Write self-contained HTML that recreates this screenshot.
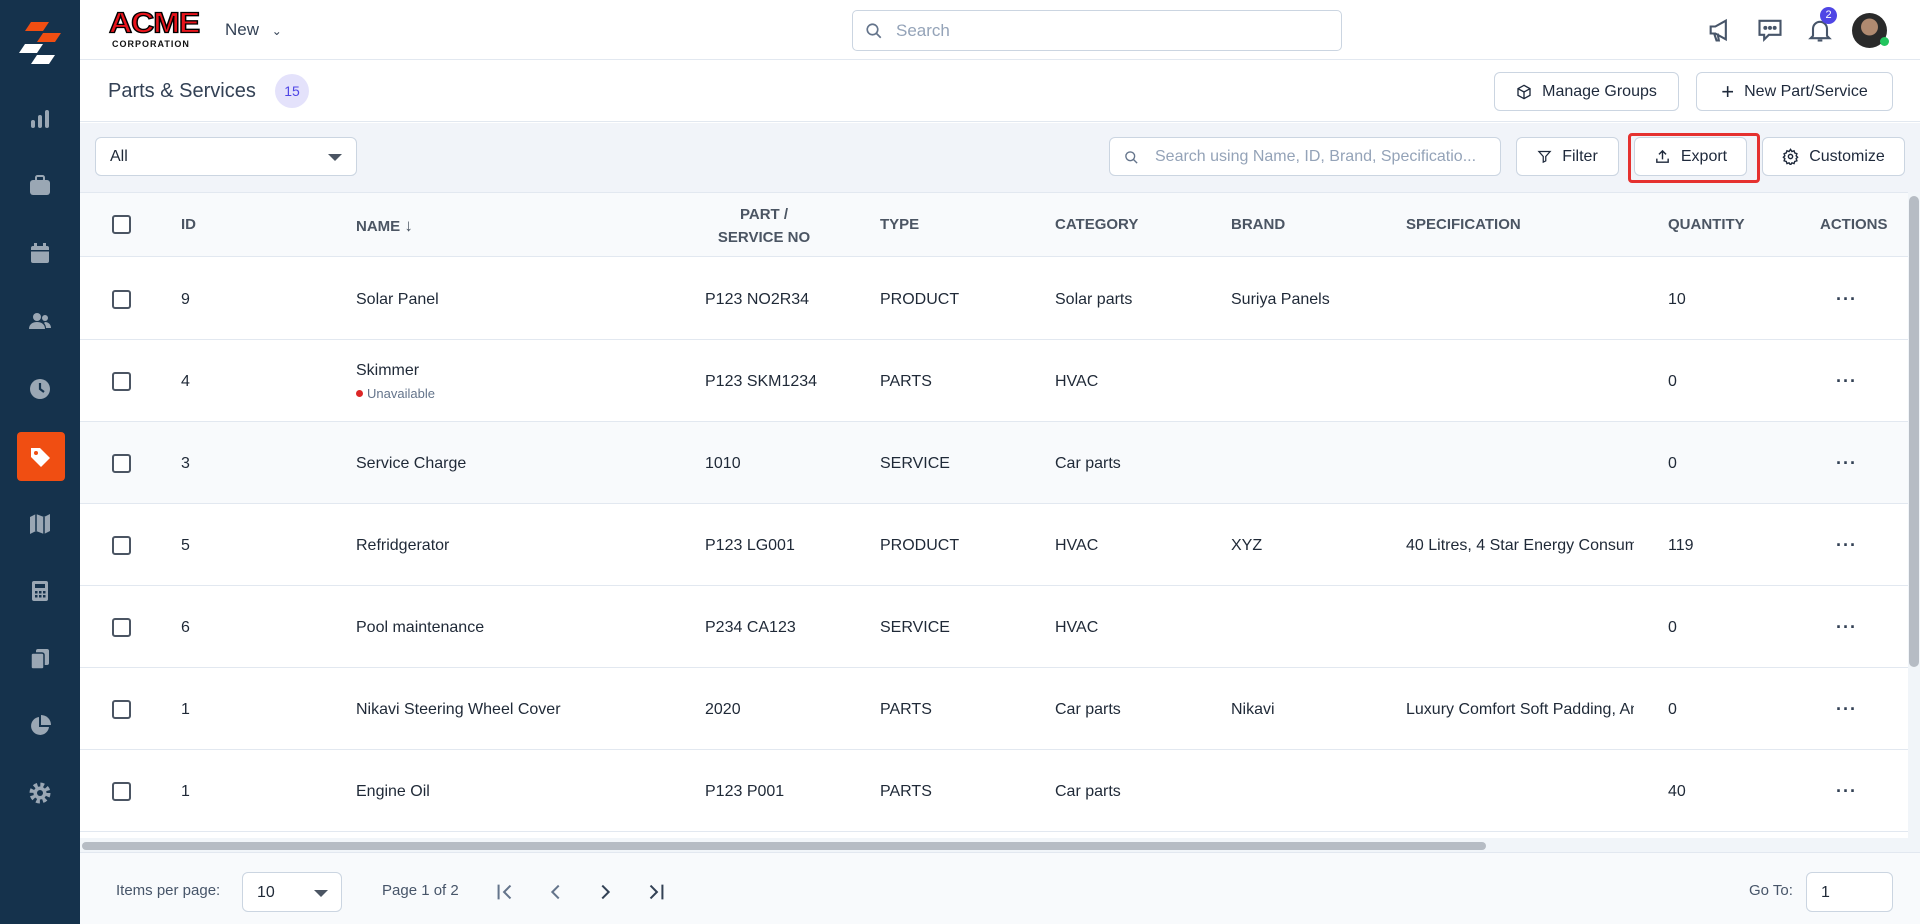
<!DOCTYPE html>
<html><head><meta charset="utf-8"><style>
*{box-sizing:border-box;margin:0;padding:0}
body{width:1920px;height:924px;overflow:hidden;font-family:"Liberation Sans",sans-serif;background:#fff;color:#1f2937;position:relative}
.abs{position:absolute}
.side{left:0;top:0;width:80px;height:924px;background:#15324c}
.sico{position:absolute;left:28px;width:24px;height:24px}
.top{left:80px;top:0;right:0;height:60px;border-bottom:1px solid #e2e8f0;background:#fff}
.btn{position:absolute;border:1px solid #cbd5e1;border-radius:6px;background:#fff;font-size:16px;color:#1e293b;display:flex;align-items:center;justify-content:center;gap:10px}
.hdr{position:absolute;font-size:15px;color:#4b5563;font-weight:bold}
.cell{position:absolute;font-size:16px;color:#1f2937}
.cb{position:absolute;left:112px;width:19px;height:19px;border:2px solid #4b5563;border-radius:3px;background:#fff}
.row{position:absolute;left:80px;width:1828px;height:82px;border-bottom:1px solid #e2e8f0}
.dots{position:absolute;left:1836px;font-size:18px;font-weight:bold;color:#334155;letter-spacing:1px}
</style></head><body>
<div class="abs side">
  <svg class="abs" style="left:17px;top:22px" width="46" height="46" viewBox="0 0 46 46">
    <polygon points="14,0 32,0 26,9 8,9" fill="#f04e12"/>
    <polygon points="26,11 44,11 38,20 20,20" fill="#f04e12"/>
    <polygon points="8,22 26,22 20,31 2,31" fill="#fff"/>
    <polygon points="20,33 38,33 32,42 14,42" fill="#fff"/>
  </svg>
  <svg class="sico" style="top:107px" viewBox="0 0 24 24" fill="#9aa7b4"><rect x="3" y="13" width="4" height="8" rx="2"/><rect x="10" y="8" width="4" height="13" rx="2"/><rect x="17" y="3" width="4" height="18" rx="2"/></svg>
  <svg class="sico" style="top:174px" viewBox="0 0 24 24" fill="#9aa7b4"><rect x="2" y="6" width="20" height="15" rx="3"/><rect x="8" y="2" width="8" height="5" rx="1.5" fill="none" stroke="#9aa7b4" stroke-width="2"/></svg>
  <svg class="sico" style="top:241px" viewBox="0 0 24 24" fill="#9aa7b4"><rect x="3" y="5" width="18" height="17" rx="2"/><rect x="6" y="2" width="3" height="5"/><rect x="15" y="2" width="3" height="5"/><rect x="3" y="9" width="18" height="1.5" fill="#15324c"/></svg>
  <svg class="sico" style="top:309px" viewBox="0 0 24 24" fill="#9aa7b4"><circle cx="9" cy="8" r="4"/><circle cx="17" cy="9" r="3"/><path d="M1 20c0-5 4-7 8-7s8 2 8 7z"/><path d="M17 13c3 0 6 2 6 6h-5c0-2-1-4-2-5z"/></svg>
  <svg class="sico" style="top:377px" viewBox="0 0 24 24"><circle cx="12" cy="12" r="10" fill="#9aa7b4"/><path d="M12 6v6l4 3" stroke="#15324c" stroke-width="2.2" fill="none"/></svg>
  <div class="abs" style="left:17px;top:432px;width:48px;height:49px;background:#f04e12;border-radius:4px"></div>
  <svg class="sico" style="top:445px" viewBox="0 0 24 24"><path d="M3 3h9l10 10-9 9L3 12z" fill="#fff"/><circle cx="8" cy="8" r="2" fill="#f04e12"/></svg>
  <svg class="sico" style="top:512px" viewBox="0 0 24 24" fill="#9aa7b4"><path d="M2 5l6-3 8 3 6-3v17l-6 3-8-3-6 3z"/><path d="M8 2v17M16 5v17" stroke="#15324c" stroke-width="1.5"/></svg>
  <svg class="sico" style="top:579px" viewBox="0 0 24 24" fill="#9aa7b4"><rect x="4" y="2" width="16" height="20" rx="2"/><rect x="7" y="5" width="10" height="4" fill="#15324c"/><g fill="#15324c"><rect x="7" y="12" width="2.5" height="2.5"/><rect x="11" y="12" width="2.5" height="2.5"/><rect x="15" y="12" width="2.5" height="2.5"/><rect x="7" y="16" width="2.5" height="2.5"/><rect x="11" y="16" width="2.5" height="2.5"/><rect x="15" y="16" width="2.5" height="2.5"/></g></svg>
  <svg class="sico" style="top:647px" viewBox="0 0 24 24" fill="#9aa7b4"><rect x="8" y="2" width="13" height="16" rx="2"/><rect x="3" y="6" width="13" height="16" rx="2" stroke="#15324c" stroke-width="1.5"/></svg>
  <svg class="sico" style="top:714px" viewBox="0 0 24 24" fill="#9aa7b4"><path d="M11 3a9 9 0 1 0 10 10H11z"/><path d="M13 1v10h10A10 10 0 0 0 13 1z"/></svg>
  <svg class="sico" style="top:781px" viewBox="0 0 24 24"><circle cx="12" cy="12" r="8" fill="none" stroke="#9aa7b4" stroke-width="5" stroke-dasharray="3.5 2.8"/><circle cx="12" cy="12" r="6.5" fill="#9aa7b4"/><circle cx="12" cy="12" r="3" fill="#15324c"/></svg>
</div>

<div class="abs top">
  <div class="abs" style="left:29px;top:8px;font-family:'Liberation Sans';font-weight:900;font-size:32px;color:#e8141b;letter-spacing:-1px;line-height:32px;-webkit-text-stroke:1.5px #000;transform:scaleY(0.9);transform-origin:top left">ACME</div>
  <div class="abs" style="left:32px;top:39px;font-size:9px;font-weight:bold;color:#111;letter-spacing:1px">CORPORATION</div>
  <div class="abs" style="left:145px;top:20px;font-size:17px;color:#334155">New <span style="font-size:12px;margin-left:8px">&#8964;</span></div>
  <div class="abs" style="left:772px;top:10px;width:490px;height:41px;border:1px solid #cbd5e1;border-radius:5px">
    <svg class="abs" style="left:12px;top:11px" width="18" height="18" viewBox="0 0 24 24" fill="none" stroke="#64748b" stroke-width="2.2"><circle cx="10" cy="10" r="7"/><path d="M15 15l6 6"/></svg>
    <div class="abs" style="left:43px;top:10px;font-size:17px;color:#94a3b8">Search</div>
  </div>
  <svg class="abs" style="left:1626px;top:16px" width="28" height="28" viewBox="0 0 24 24" fill="none" stroke="#475569" stroke-width="1.8"><path d="M4 9h4l9-5v16l-9-5H4z"/><path d="M7 15l2 6h2l-1-6"/></svg>
  <svg class="abs" style="left:1676px;top:15px" width="28" height="28" viewBox="0 0 24 24" fill="none" stroke="#475569" stroke-width="1.8"><path d="M3 5h18v12H11l-4 4v-4H3z"/><circle cx="8" cy="11" r=".8" fill="#475569"/><circle cx="12" cy="11" r=".8" fill="#475569"/><circle cx="16" cy="11" r=".8" fill="#475569"/></svg>
  <svg class="abs" style="left:1726px;top:16px" width="28" height="28" viewBox="0 0 24 24" fill="none" stroke="#475569" stroke-width="1.8"><path d="M6 17V11a6 6 0 0 1 12 0v6l2 2H4z"/><path d="M10 21h4"/></svg>
  <div class="abs" style="left:1740px;top:7px;width:17px;height:17px;border-radius:50%;background:#4f46e5;color:#fff;font-size:11px;text-align:center;line-height:17px">2</div>
  <div class="abs" style="left:1772px;top:13px;width:35px;height:35px;border-radius:50%;background:radial-gradient(circle at 50% 40%,#b08a70 0 30%,#2a2a2a 32%)"></div>
  <div class="abs" style="left:1800px;top:37px;width:9px;height:9px;border-radius:50%;background:#22c55e"></div>
</div>

<div class="abs" style="left:80px;top:61px;right:0;height:61px;border-bottom:1px solid #e2e8f0;background:#fff">
  <div class="abs" style="left:28px;top:19px;font-size:20px;color:#334155">Parts &amp; Services</div>
  <div class="abs" style="left:195px;top:13px;width:34px;height:34px;border-radius:50%;background:#e4e2fb;color:#4f46e5;font-size:14px;text-align:center;line-height:34px">15</div>
</div>
<div class="btn" style="left:1494px;top:72px;width:185px;height:39px"><svg width="16" height="16" viewBox="0 0 24 24" fill="none" stroke="#1e293b" stroke-width="2"><path d="M12 2l9 5v10l-9 5-9-5V7z"/><path d="M3 7l9 5 9-5M12 12v10"/></svg>Manage Groups</div>
<div class="btn" style="left:1696px;top:72px;width:197px;height:39px"><span style="font-size:22px;font-weight:300">+</span>New Part/Service</div>

<div class="abs" style="left:80px;top:123px;width:1840px;height:69px;background:#f1f4f9"></div>
<div class="abs" style="left:95px;top:137px;width:262px;height:39px;border:1px solid #cbd5e1;border-radius:6px;background:#fff">
  <div class="abs" style="left:14px;top:10px;font-size:16px">All</div>
  <div class="abs" style="right:14px;top:16px;width:0;height:0;border-left:7px solid transparent;border-right:7px solid transparent;border-top:7px solid #4b5563"></div>
</div>
<div class="abs" style="left:1109px;top:137px;width:392px;height:39px;border:1px solid #cbd5e1;border-radius:6px;background:#fff">
  <svg class="abs" style="left:14px;top:12px" width="15" height="15" viewBox="0 0 24 24" fill="none" stroke="#64748b" stroke-width="2.2"><circle cx="10" cy="10" r="7"/><path d="M15 15l6 6"/></svg>
  <div class="abs" style="left:45px;top:10px;font-size:16px;color:#94a3b8;white-space:nowrap">Search using Name, ID, Brand, Specificatio...</div>
</div>
<div class="btn" style="left:1516px;top:137px;width:103px;height:39px"><svg width="15" height="15" viewBox="0 0 24 24" fill="none" stroke="#1e293b" stroke-width="2"><path d="M3 4h18l-7 8v7l-4 2v-9z"/></svg>Filter</div>
<div class="abs" style="left:1628px;top:133px;width:132px;height:50px;border:3px solid #e5312f;border-radius:4px"></div>
<div class="btn" style="left:1634px;top:137px;width:113px;height:39px"><svg width="17" height="17" viewBox="0 0 24 24" fill="none" stroke="#1e293b" stroke-width="2"><path d="M12 16V4M7 9l5-5 5 5M4 15v5h16v-5"/></svg>Export</div>
<div class="btn" style="left:1762px;top:137px;width:143px;height:39px"><svg width="17" height="17" viewBox="0 0 24 24" fill="none" stroke="#1e293b" stroke-width="2"><circle cx="12" cy="12" r="3"/><path d="M12 2l2 3 3-1 1 3 3 1-1 3 2 2-2 2 1 3-3 1-1 3-3-1-2 3-2-3-3 1-1-3-3-1 1-3-2-2 2-2-1-3 3-1 1-3 3 1z"/></svg>Customize</div>

<div class="abs" style="left:80px;top:192px;width:1828px;height:65px;background:#f8fafc;border-bottom:1px solid #e2e8f0;border-top:1px solid #e2e8f0"></div>
<div class="cb" style="top:215px"></div>
<div class="hdr" style="left:181px;top:216px">ID</div>
<div class="hdr" style="left:356px;top:216px">NAME <span style="font-size:17px">&#8595;</span></div>
<div class="hdr" style="left:700px;top:203px;width:128px;text-align:center;line-height:23px">PART /<br>SERVICE NO</div>
<div class="hdr" style="left:880px;top:216px">TYPE</div>
<div class="hdr" style="left:1055px;top:216px">CATEGORY</div>
<div class="hdr" style="left:1231px;top:216px">BRAND</div>
<div class="hdr" style="left:1406px;top:216px">SPECIFICATION</div>
<div class="hdr" style="left:1668px;top:216px">QUANTITY</div>
<div class="hdr" style="left:1820px;top:216px">ACTIONS</div>

<div class="row" style="top:258px"></div>
<div class="row" style="top:340px"></div>
<div class="row" style="top:422px;background:#f8fafc"></div>
<div class="row" style="top:504px"></div>
<div class="row" style="top:586px"></div>
<div class="row" style="top:668px"></div>
<div class="row" style="top:750px"></div>

<div class="cb" style="top:290px"></div><div class="cell" style="left:181px;top:291px">9</div><div class="cell" style="left:356px;top:291px">Solar Panel</div><div class="cell" style="left:705px;top:291px">P123 NO2R34</div><div class="cell" style="left:880px;top:291px">PRODUCT</div><div class="cell" style="left:1055px;top:291px">Solar parts</div><div class="cell" style="left:1231px;top:291px">Suriya Panels</div><div class="cell" style="left:1668px;top:291px">10</div><div class="dots" style="top:289px">···</div>

<div class="cb" style="top:372px"></div><div class="cell" style="left:181px;top:373px">4</div><div class="cell" style="left:356px;top:362px">Skimmer</div><div class="cell" style="left:356px;top:386px;font-size:13px;color:#64748b"><span style="display:inline-block;width:7px;height:7px;border-radius:50%;background:#dc2626;margin-right:4px;vertical-align:1px"></span>Unavailable</div><div class="cell" style="left:705px;top:373px">P123 SKM1234</div><div class="cell" style="left:880px;top:373px">PARTS</div><div class="cell" style="left:1055px;top:373px">HVAC</div><div class="cell" style="left:1668px;top:373px">0</div><div class="dots" style="top:371px">···</div>

<div class="cb" style="top:454px"></div><div class="cell" style="left:181px;top:455px">3</div><div class="cell" style="left:356px;top:455px">Service Charge</div><div class="cell" style="left:705px;top:455px">1010</div><div class="cell" style="left:880px;top:455px">SERVICE</div><div class="cell" style="left:1055px;top:455px">Car parts</div><div class="cell" style="left:1668px;top:455px">0</div><div class="dots" style="top:453px">···</div>

<div class="cb" style="top:536px"></div><div class="cell" style="left:181px;top:537px">5</div><div class="cell" style="left:356px;top:537px">Refridgerator</div><div class="cell" style="left:705px;top:537px">P123 LG001</div><div class="cell" style="left:880px;top:537px">PRODUCT</div><div class="cell" style="left:1055px;top:537px">HVAC</div><div class="cell" style="left:1231px;top:537px">XYZ</div><div class="cell" style="left:1406px;top:537px;width:228px;overflow:hidden;white-space:nowrap">40 Litres, 4 Star Energy Consumption</div><div class="cell" style="left:1668px;top:537px">119</div><div class="dots" style="top:535px">···</div>

<div class="cb" style="top:618px"></div><div class="cell" style="left:181px;top:619px">6</div><div class="cell" style="left:356px;top:619px">Pool maintenance</div><div class="cell" style="left:705px;top:619px">P234 CA123</div><div class="cell" style="left:880px;top:619px">SERVICE</div><div class="cell" style="left:1055px;top:619px">HVAC</div><div class="cell" style="left:1668px;top:619px">0</div><div class="dots" style="top:617px">···</div>

<div class="cb" style="top:700px"></div><div class="cell" style="left:181px;top:701px">1</div><div class="cell" style="left:356px;top:701px">Nikavi Steering Wheel Cover</div><div class="cell" style="left:705px;top:701px">2020</div><div class="cell" style="left:880px;top:701px">PARTS</div><div class="cell" style="left:1055px;top:701px">Car parts</div><div class="cell" style="left:1231px;top:701px">Nikavi</div><div class="cell" style="left:1406px;top:701px;width:228px;overflow:hidden;white-space:nowrap">Luxury Comfort Soft Padding, Anti-slip</div><div class="cell" style="left:1668px;top:701px">0</div><div class="dots" style="top:699px">···</div>

<div class="cb" style="top:782px"></div><div class="cell" style="left:181px;top:783px">1</div><div class="cell" style="left:356px;top:783px">Engine Oil</div><div class="cell" style="left:705px;top:783px">P123 P001</div><div class="cell" style="left:880px;top:783px">PARTS</div><div class="cell" style="left:1055px;top:783px">Car parts</div><div class="cell" style="left:1668px;top:783px">40</div><div class="dots" style="top:781px">···</div>

<div class="abs" style="left:80px;top:838px;width:1828px;height:14px;background:#f1f5f9"></div>
<div class="abs" style="left:82px;top:842px;width:1404px;height:8px;border-radius:4px;background:#b6bcc4"></div>
<div class="abs" style="left:1908px;top:192px;width:12px;height:660px;background:#f1f5f9"></div>
<div class="abs" style="left:1909px;top:196px;width:10px;height:471px;border-radius:5px;background:#b6bcc4"></div>

<div class="abs" style="left:80px;top:852px;width:1840px;height:72px;background:#f8fafc;border-top:1px solid #e2e8f0"></div>
<div class="abs" style="left:116px;top:882px;font-size:15px;color:#475569">Items per page:</div>
<div class="abs" style="left:242px;top:872px;width:100px;height:40px;border:1px solid #cbd5e1;border-radius:6px;background:#fff">
  <div class="abs" style="left:14px;top:11px;font-size:16px">10</div>
  <div class="abs" style="right:13px;top:17px;border-left:7px solid transparent;border-right:7px solid transparent;border-top:7px solid #4b5563"></div>
</div>
<div class="abs" style="left:382px;top:882px;font-size:15px;color:#475569">Page 1 of 2</div>
<svg class="abs" style="left:494px;top:881px" width="22" height="22" viewBox="0 0 24 24" fill="none" stroke="#64748b" stroke-width="2.2"><path d="M5 4v16M18 5l-7 7 7 7"/></svg>
<svg class="abs" style="left:545px;top:881px" width="22" height="22" viewBox="0 0 24 24" fill="none" stroke="#64748b" stroke-width="2.2"><path d="M15 5l-7 7 7 7"/></svg>
<svg class="abs" style="left:594px;top:881px" width="22" height="22" viewBox="0 0 24 24" fill="none" stroke="#334155" stroke-width="2.2"><path d="M9 5l7 7-7 7"/></svg>
<svg class="abs" style="left:645px;top:881px" width="22" height="22" viewBox="0 0 24 24" fill="none" stroke="#334155" stroke-width="2.2"><path d="M19 4v16M6 5l7 7-7 7"/></svg>
<div class="abs" style="left:1749px;top:882px;font-size:15px;color:#475569">Go To:</div>
<div class="abs" style="left:1806px;top:872px;width:87px;height:40px;border:1px solid #cbd5e1;border-radius:6px;background:#fff"><div class="abs" style="left:14px;top:11px;font-size:16px">1</div></div>
</body></html>
